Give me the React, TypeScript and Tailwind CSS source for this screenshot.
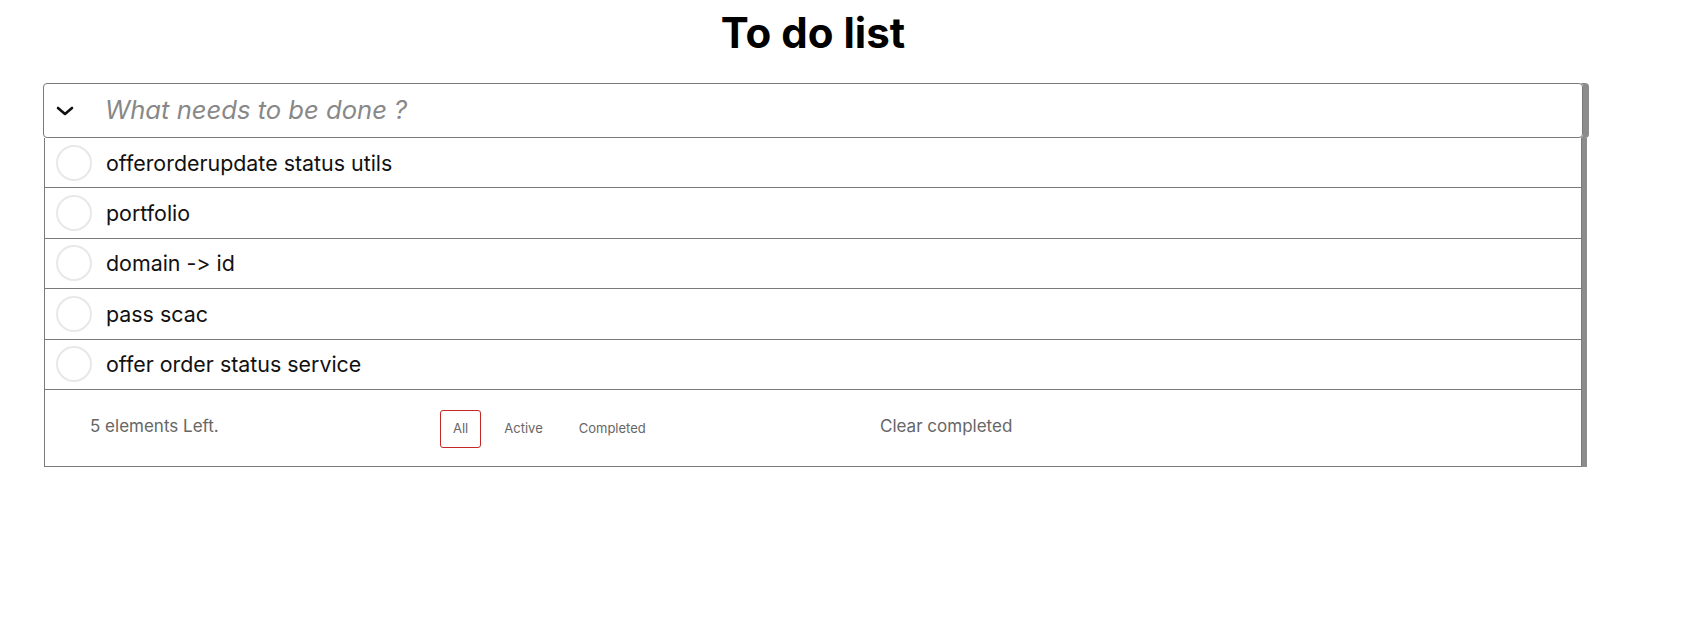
import { useState } from "react";

const todos = [
  "offerorderupdate status utils",
  "portfolio",
  "domain -> id",
  "pass scac",
  "offer order status service",
];

const filters = ["All", "Active", "Completed"];

export default function App() {
  const [filter, setFilter] = useState("All");

  return (
    <div className="min-h-screen bg-white font-['Inter',sans-serif] text-black [font-feature-settings:'calt'_0,'liga'_0]">
      <div className="ml-[43px] w-[1540px]">
        <h1 className="pt-[6px] text-center text-[42px] leading-[54px] font-bold">
          To do list
        </h1>

        <div className="mt-[23px] shadow-[6px_0_0_#8c8c8c] rounded-[4px]">
          <div className="flex h-[55px] items-center rounded-[4px] border border-[#7a7a7a] bg-white">
            <div className="flex w-[61px] pl-[12px]">
              <svg width="18" height="10" viewBox="0 0 18 10" fill="none">
                <path d="M2 2l7 6 7-6" stroke="#111" strokeWidth="2.6" strokeLinecap="round" strokeLinejoin="round" />
              </svg>
            </div>
            <input
              className="flex-1 bg-transparent text-[25.6px] italic text-[#888] placeholder:text-[#888] outline-none"
              placeholder="What needs to be done ?"
            />
          </div>
        </div>

        <div className="mx-[1px] shadow-[5px_0_0_#8c8c8c] border-x border-b border-[#7a7a7a] bg-white">
          {todos.map((t) => (
            <div key={t} className="flex h-[50.4px] items-center border-b border-[#7a7a7a]">
              <div className="ml-[11px] h-[36px] w-[36px] rounded-full border-2 border-[#e8e8e8]" />
              <span className="ml-[14px] text-[21.4px] text-[#111]">{t}</span>
            </div>
          ))}

          <div className="flex h-[76px] items-start pt-[20px] pl-[45px] text-[#666]">
            <span className="mt-[4px] w-[350px] text-[17px] leading-[24px]">5 elements Left.</span>
            <div className="flex w-[440px] gap-[10px]">
              {filters.map((f) => (
                <button
                  key={f}
                  onClick={() => setFilter(f)}
                  className={`h-[38px] rounded-[3px] border px-[12px] text-[13px] ${
                    filter === f ? "border-[#c62828]" : "border-transparent"
                  }`}
                >
                  {f}
                </button>
              ))}
            </div>
            <button className="mt-[4px] text-[17px] leading-[24px] text-[#666]">Clear completed</button>
          </div>
        </div>
      </div>
    </div>
  );
}
